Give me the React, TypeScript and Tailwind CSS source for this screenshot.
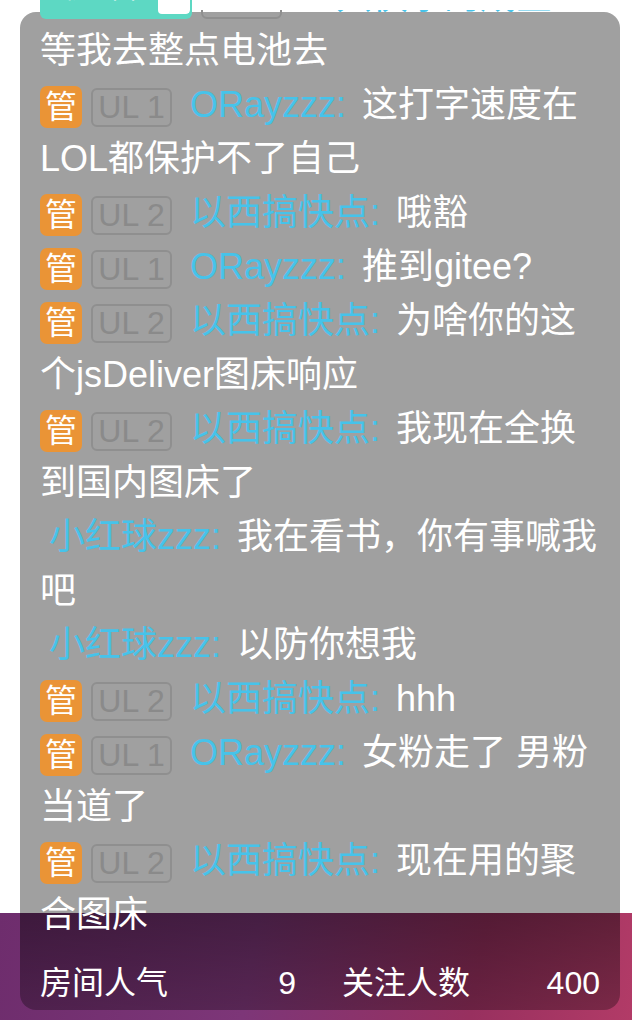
import React from "react";

type Msg = {
  fan?: boolean;
  admin?: boolean;
  ul?: number;
  name: string;
  text: string;
};

const msgs: Msg[] = [
  { fan: true, ul: 3, name: "一只快乐的咸鱼:", text: "等我去整点电池去" },
  { admin: true, ul: 1, name: "ORayzzz:", text: "这打字速度在LOL都保护不了自己" },
  { admin: true, ul: 2, name: "以西搞快点:", text: "哦豁" },
  { admin: true, ul: 1, name: "ORayzzz:", text: "推到gitee?" },
  { admin: true, ul: 2, name: "以西搞快点:", text: "为啥你的这个jsDeliver图床响应" },
  { admin: true, ul: 2, name: "以西搞快点:", text: "我现在全换到国内图床了" },
  { name: "小红球zzz:", text: "我在看书，你有事喊我吧" },
  { name: "小红球zzz:", text: "以防你想我" },
  { admin: true, ul: 2, name: "以西搞快点:", text: "hhh" },
  { admin: true, ul: 1, name: "ORayzzz:", text: "女粉走了 男粉当道了" },
  { admin: true, ul: 2, name: "以西搞快点:", text: "现在用的聚合图床" },
];

function Row({ m }: { m: Msg }) {
  return (
    <div>
      {m.fan && (
        <span className="inline-flex h-[39px] w-[152px] rounded-[6px] bg-[#5dd8c3] align-middle mr-[9px]" />
      )}
      {m.admin && (
        <span className="inline-flex h-[42px] w-[42px] items-center justify-center rounded-[7px] bg-[#ea9436] align-middle mr-[9px] text-[32px] leading-none text-white">
          管
        </span>
      )}
      {m.ul !== undefined && (
        <span className="inline-flex h-[39px] w-[81px] items-center justify-center rounded-[6px] border-2 border-[#8f8f8f] align-middle mr-[9px] text-[32px] leading-none text-[#8a8a8a]">
          UL {m.ul}
        </span>
      )}
      <span className="ml-[9px] mr-[6px] text-[#46c3ea]">{m.name}</span>{" "}
      <span className="text-white">{m.text}</span>
    </div>
  );
}

export default function App() {
  return (
    <div
      className="grid h-[1020px] w-[632px] grid-cols-1 grid-rows-1 overflow-hidden"
      style={{ fontFamily: '"Liberation Sans", "Noto Sans CJK SC", sans-serif' }}
    >
      {/* page background */}
      <div className="col-start-1 row-start-1 flex flex-col">
        <div className="h-[913px] bg-white" />
        <div className="flex-1 bg-[linear-gradient(100deg,#6e2d6d_0%,#7d3678_40%,#98305f_75%,#b23b67_100%)]" />
      </div>

      {/* panel */}
      <div className="col-start-1 row-start-1 flex flex-col pl-[20px] pt-[12px]">
        <div className="h-[901px] w-[600px] rounded-t-[16px] bg-[#a0a0a0]" />
        <div className="h-[97px] w-[600px] rounded-b-[16px] bg-[linear-gradient(180deg,rgba(0,0,0,0.45),rgba(0,0,0,0.3))] px-[20px] pt-[43px]">
          <div className="grid grid-cols-2 gap-x-[44px] text-[32px] leading-[54px] text-white">
            <div className="flex justify-between">
              <span>房间人气</span>
              <span className="pr-[2px]">9</span>
            </div>
            <div className="flex justify-between">
              <span>关注人数</span>
              <span>400</span>
            </div>
          </div>
        </div>
      </div>

      {/* chat text */}
      <div className="col-start-1 row-start-1">
        <div className="ml-[40px] mt-[-30px] w-[566px] text-[36px] leading-[54px] text-white">
          {msgs.map((m, i) => (
            <Row key={i} m={m} />
          ))}
        </div>
      </div>

      {/* top header strip over scrolled content */}
      <div className="col-start-1 row-start-1 self-start">
        <div className="relative h-[10px] bg-white">
          <div className="absolute left-[40px] top-0 flex h-[16px] w-[152px] overflow-hidden rounded-b-[6px] border-2 border-t-0 border-[#5dd8c3] bg-[#5dd8c3]">
            <div className="flex flex-1 justify-center overflow-hidden">
              <span className="mt-[-22px] text-[24px] leading-[24px] text-white">粉丝团</span>
            </div>
            <div className="flex w-[32px] justify-center overflow-hidden rounded-b-[4px] bg-white">
              <span className="mt-[-22px] text-[24px] leading-[24px] text-[#5dd8c3]">8</span>
            </div>
          </div>
        </div>
      </div>
    </div>
  );
}
